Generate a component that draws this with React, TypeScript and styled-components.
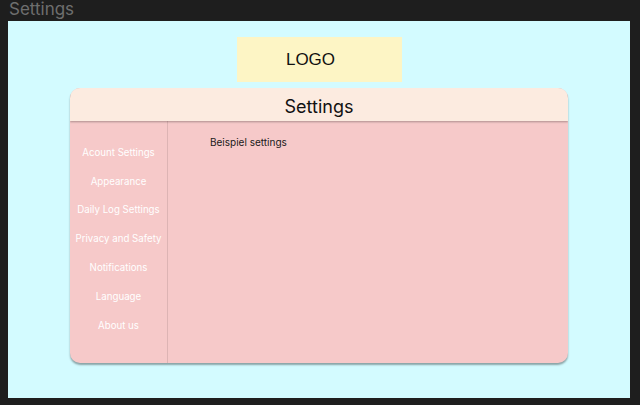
import React from "react";
import styled, { createGlobalStyle } from "styled-components";

const Global = createGlobalStyle`
  html, body { margin: 0; padding: 0; background: #1e1e1e; }
  body { font-family: Inter, "Noto Sans", sans-serif; }
`;

const Page = styled.div`
  width: 640px;
  height: 405px;
  background: #1e1e1e;
  overflow: hidden;
`;

const PageTitle = styled.div`
  height: 21px;
  padding-left: 9px;
  font-family: Inter, sans-serif;
  font-size: 17px;
  line-height: 18px;
  color: #6e6e6e;
`;

const Frame = styled.div`
  margin-left: 8px;
  width: 622px;
  height: 377px;
  background: #d3fbff;
  display: flex;
  flex-direction: column;
  align-items: center;
  padding-top: 16px;
  box-sizing: border-box;
`;

const Logo = styled.div`
  width: 165px;
  height: 45px;
  background: #fdf5c5;
  display: flex;
  align-items: center;
  justify-content: center;
  padding-right: 17px;
  box-sizing: border-box;
  font-family: "Liberation Sans", Arial, sans-serif;
  font-size: 17px;
  color: #111;
`;

const Card = styled.div`
  margin-top: 6px;
  width: 498px;
  height: 275px;
  border-radius: 10px;
  background: #f6c9c9;
  box-shadow: 0 2px 2px rgba(0, 0, 0, 0.35);
  display: flex;
  flex-direction: column;
  overflow: hidden;
`;

const Header = styled.div`
  height: 33px;
  flex: none;
  box-sizing: border-box;
  padding-top: 3px;
  background: #fcebe0;
  box-shadow: 0 1px 2px rgba(0, 0, 0, 0.3);
  display: flex;
  align-items: center;
  justify-content: center;
  font-size: 18px;
  color: #111;
  position: relative;
  z-index: 1;
`;

const Body = styled.div`
  flex: 1;
  display: flex;
`;

const Sidebar = styled.nav`
  width: 97px;
  flex: none;
  border-right: 1px solid rgba(0, 0, 0, 0.1);
  padding-top: 17px;
  display: flex;
  flex-direction: column;
  align-items: center;
`;

const NavItem = styled.div`
  height: 28.8px;
  display: flex;
  align-items: center;
  font-size: 9.7px;
  color: #ffffff;
  white-space: nowrap;
`;

const Content = styled.div`
  flex: 1;
  padding: 15px 0 0 42px;
  font-size: 10px;
  color: #1a1a1a;
`;

const items = [
  "Acount Settings",
  "Appearance",
  "Daily Log Settings",
  "Privacy and Safety",
  "Notifications",
  "Language",
  "About us",
];

export default function App() {
  return (
    <Page>
      <Global />
      <PageTitle>Settings</PageTitle>
      <Frame>
        <Logo>LOGO</Logo>
        <Card>
          <Header>Settings</Header>
          <Body>
            <Sidebar>
              {items.map((t) => (
                <NavItem key={t}>{t}</NavItem>
              ))}
            </Sidebar>
            <Content>Beispiel settings</Content>
          </Body>
        </Card>
      </Frame>
    </Page>
  );
}
